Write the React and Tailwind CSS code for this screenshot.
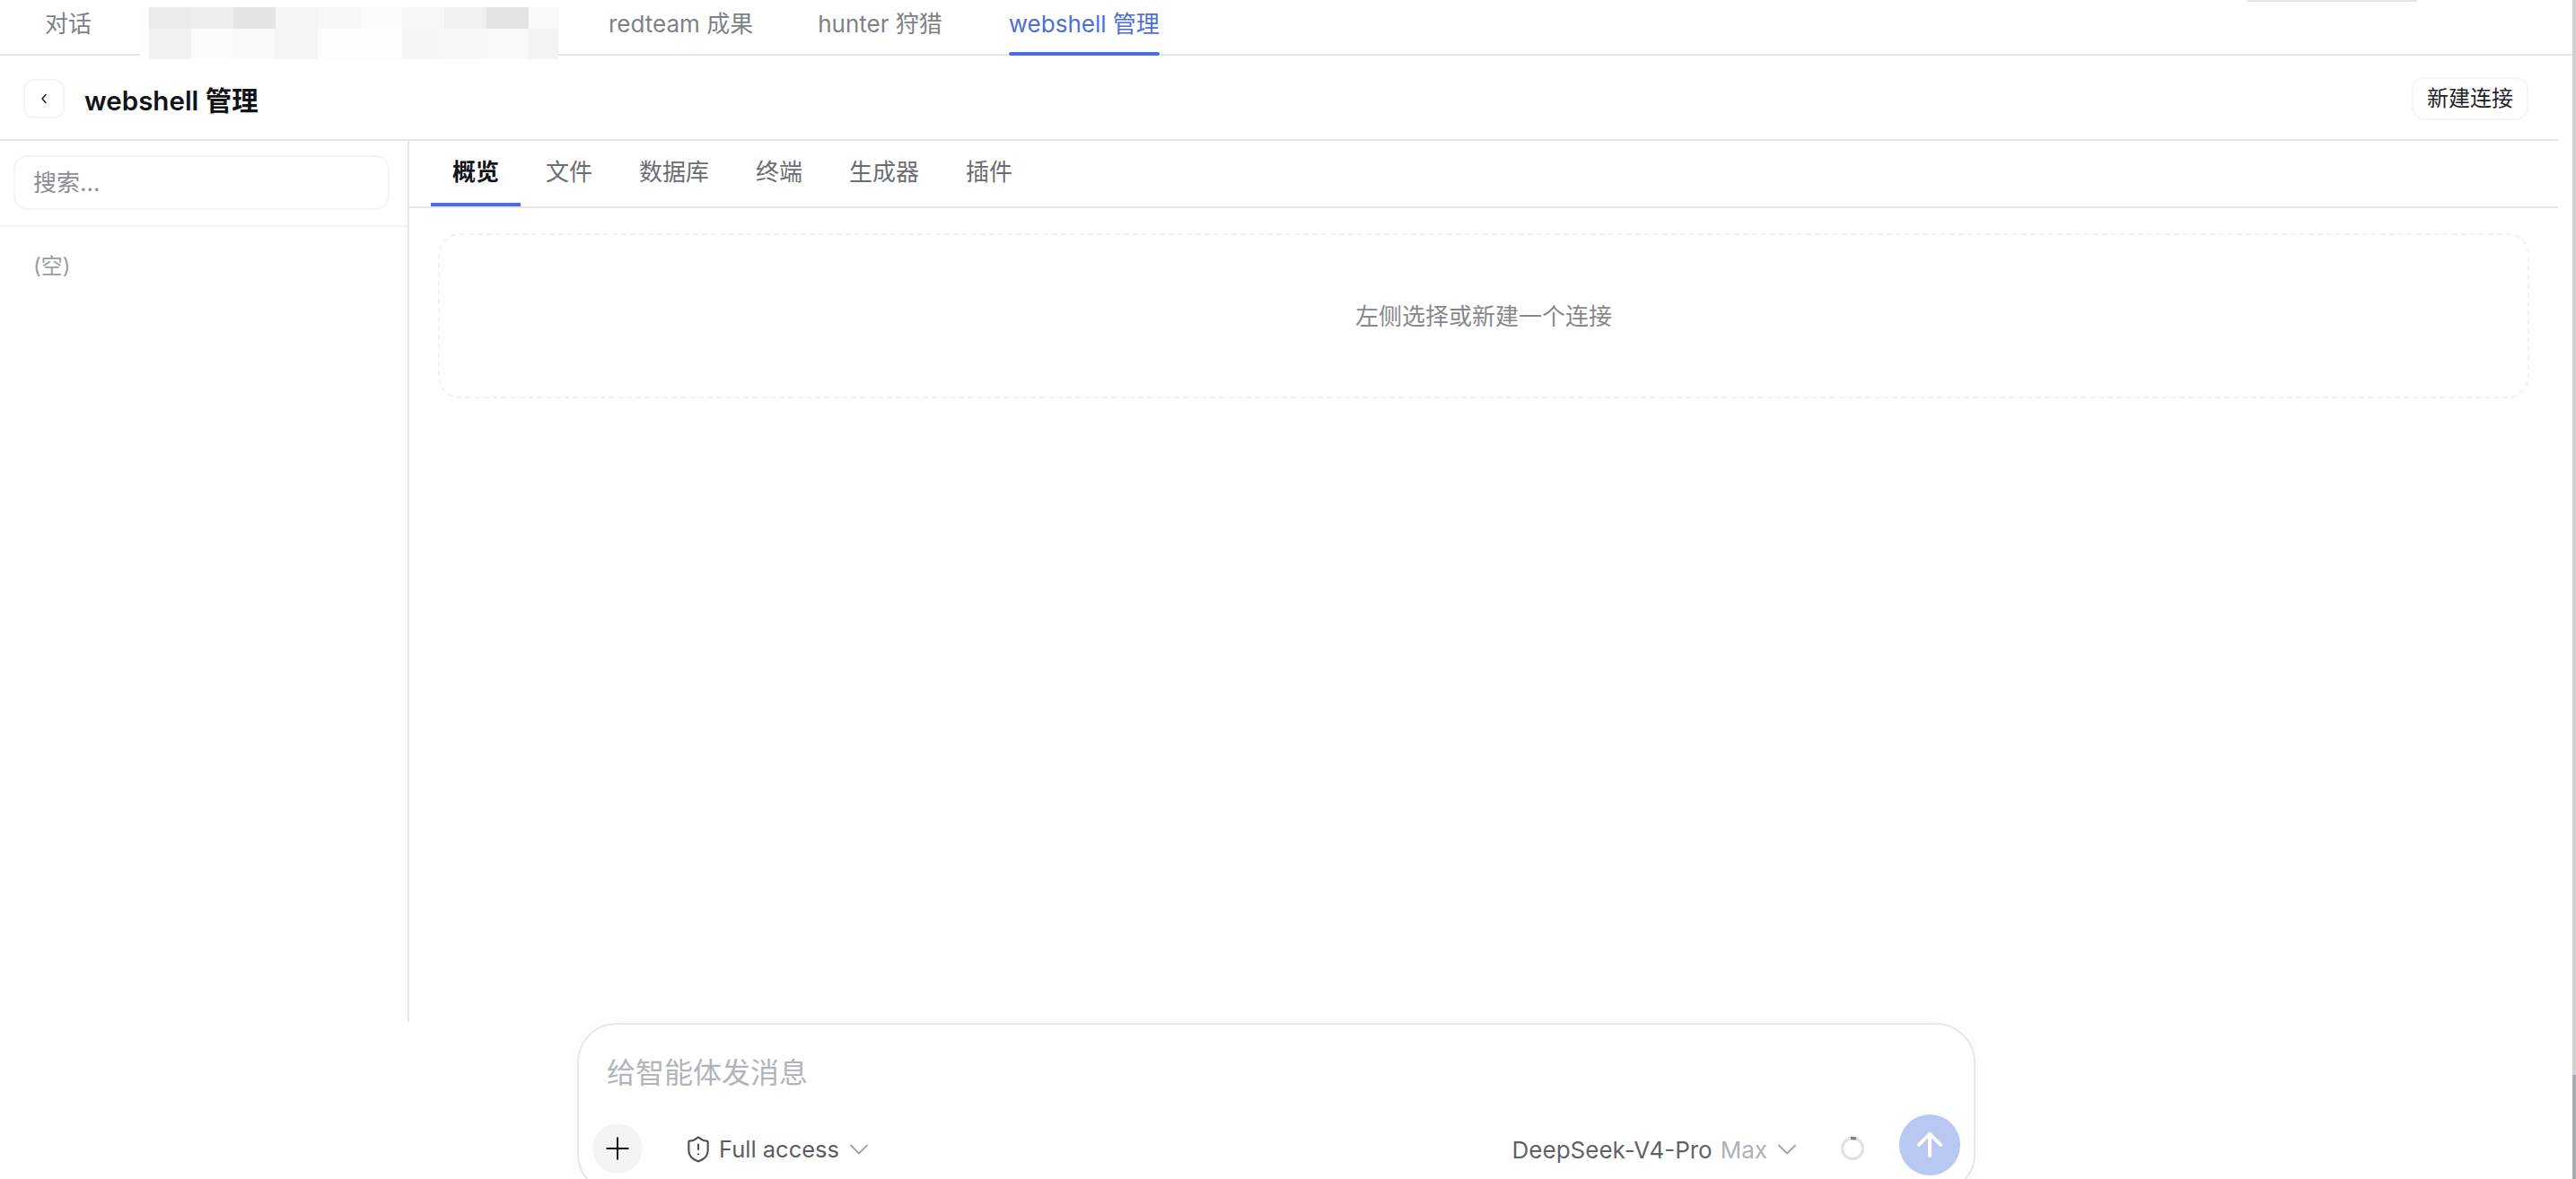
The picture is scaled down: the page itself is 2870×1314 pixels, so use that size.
import { ChevronDown, Plus, ShieldAlert, ArrowUp } from 'lucide-react';

const FONT = "font-['Inter','Noto_Sans_CJK_SC',sans-serif]";

const MOSAIC = [
  '#fdfdfd', '#ebebeb', '#ededed', '#e4e4e4', '#f5f5f5', '#f8f8f8', '#fbfbfb', '#f7f8f7', '#f0f0f0', '#e2e3e4', '#f9f9f9',
  '#fdfdfd', '#f1f1f1', '#fbfbfb', '#f9f9f9', '#f5f5f5', '#fdfdfd', '#fdfdfd', '#f6f6f6', '#f8f8f8', '#f9f9f9', '#f2f3f2',
];

const PANEL_TABS = ['文件', '数据库', '终端', '生成器', '插件'];

function TopTab({ label, active }) {
  return (
    <div className="flex h-[62px] flex-col justify-between">
      <span className={`mt-[12px] text-[26px] leading-[30px] ${active ? 'text-[#4a6fdc]' : 'text-[#7d8188]'}`}>{label}</span>
      <span className={`h-1 rounded-full ${active ? 'bg-[#4a6fdc]' : ''}`} />
    </div>
  );
}

function TopBar() {
  return (
    <div className="flex h-[62px] shrink-0 border-b-2 border-[#e5e7eb] pl-[50px] gap-[72px]">
      <TopTab label="对话" />
      {/* redacted tabs */}
      <div className="z-10 -ml-[18px] -mr-[16px] mt-2 grid h-[58px] w-[466px] shrink-0 grid-cols-[10px_repeat(9,47px)_1fr] grid-rows-[24px_34px]">
        {MOSAIC.map((c, i) => (
          <div key={i} style={{ backgroundColor: c }} />
        ))}
      </div>
      <TopTab label="redteam 成果" />
      <TopTab label="hunter 狩猎" />
      <div className="ml-[2px]">
        <TopTab label="webshell 管理" active />
      </div>
    </div>
  );
}

function PageHeader() {
  return (
    <div className="flex h-[95px] shrink-0 items-center justify-between border-b-2 border-[#e5e7eb] pl-[26px] pr-[33px] pt-[3px]">
      <div className="flex items-center gap-[22px]">
        <button className="flex h-[44px] w-[46px] items-center justify-center rounded-[12px] border-2 border-[#f3f4f6]">
          <svg width="8" height="12" viewBox="0 0 8 12" fill="none" stroke="#1f2937" strokeWidth="1.6" strokeLinecap="round" strokeLinejoin="round">
            <path d="M6 1.5 2 6l4 4.5" />
          </svg>
        </button>
        <h1 className="mt-[3px] text-[29.5px] font-semibold leading-[36px] text-[#111318]">webshell 管理</h1>
      </div>
      <button className="flex h-[48px] w-[130px] items-center justify-center rounded-[14px] border-2 border-[#f3f4f6] text-[24px] leading-[30px] text-[#1f2329]">
        新建连接
      </button>
    </div>
  );
}

function Sidebar() {
  return (
    <aside className="w-[456px] shrink-0 border-r-2 border-[#e5e7eb]">
      <div className="h-[96px] border-b-2 border-[#f1f2f3] pl-[15px] pr-[20px] pt-[16px]">
        <div className="flex h-[61px] items-center rounded-[16px] border-2 border-[#f3f4f6] pl-[20px] text-[26px] text-[#8a8d92]">搜索...</div>
      </div>
      <div className="pl-[37px] pt-[28px] text-[24px] leading-[32px] text-[#9a9da3]">(空)</div>
    </aside>
  );
}

function Panel() {
  return (
    <div className="min-w-0 flex-1">
      <div className="flex h-[75px] gap-1 border-b-2 border-[#e5e7eb] pl-6">
        <div className="flex h-[73px] flex-col justify-between">
          <span className="mt-[19px] px-6 text-[26px] font-semibold leading-[32px] text-[#111318]">概览</span>
          <span className="h-1 bg-[#4f6ae8]" />
        </div>
        {PANEL_TABS.map(t => (
          <span key={t} className="mt-[19px] px-6 text-[26px] leading-[32px] text-[#6a6d73]">{t}</span>
        ))}
      </div>
      <div className="px-[32px] pt-[28px]">
        <div className="flex h-[184px] items-center justify-center rounded-[24px] border-2 border-dashed border-[#f1f2f3] text-[26px] text-[#85888e]">
          左侧选择或新建一个连接
        </div>
      </div>
    </div>
  );
}

function Composer() {
  return (
    <div className="-mt-[1px] ml-[643px] h-[190px] w-[1558px] shrink-0 rounded-[44px] border-2 border-[#e5e7eb] bg-white pl-[15px] pr-[15px] shadow-[0_2px_16px_rgba(0,0,0,0.04)]">
      <div className="pl-[16px] pt-[34px] text-[32px] leading-[40px] text-[#b0b5bc]">给智能体发消息</div>
      <div className="mt-[26px] flex items-start">
        <button className="mt-[10px] flex h-[56px] w-[56px] items-center justify-center rounded-full bg-[#f3f4f6]">
          <Plus size={40} strokeWidth={1.2} className="text-[#111318]" />
        </button>
        <div className="ml-[46px] mt-[23px] flex h-[32px] items-center text-[25.5px] text-[#5a5e63]">
          <ShieldAlert size={32} strokeWidth={1.6} className="text-[#4b5056]" />
          <span className="ml-[7px]">Full access</span>
          <ChevronDown size={36} strokeWidth={1.2} className="ml-[4px] text-[#9ca3af]" />
        </div>
        <div className="ml-auto mt-[23px] flex h-[32px] items-center text-[26px] text-[#5f6368]">
          <span>DeepSeek-V4-Pro</span>
          <span className="ml-[9px] text-[#aeb2b8]">Max</span>
          <ChevronDown size={36} strokeWidth={1.2} className="ml-[4px] text-[#9ca3af]" />
        </div>
        <svg className="ml-[41px] mt-[24px]" width="28" height="28" viewBox="0 0 28 28" fill="none" strokeWidth="3.4">
          <circle cx="14" cy="14" r="11.5" stroke="#e3e3e3" />
          <path d="M12 2.7a11.5 11.5 0 0 1 6 .5" stroke="#7d8087" />
        </svg>
        <button className="ml-[38px] flex h-[68px] w-[68px] items-center justify-center rounded-full bg-[#b9c8f2]">
          <ArrowUp size={42} strokeWidth={2.2} className="text-white" />
        </button>
      </div>
    </div>
  );
}

export default function App() {
  return (
    <div className={`${FONT} relative flex h-[1314px] overflow-hidden bg-white`}>
      <div className="flex min-w-0 flex-1 flex-col">
        <TopBar />
        <div className="mr-4 flex min-h-0 flex-1 flex-col">
          <PageHeader />
          <div className="flex h-[982px] shrink-0">
            <Sidebar />
            <Panel />
          </div>
        </div>
        <div className="mb-[-17px] h-[190px] shrink-0">
          <Composer />
        </div>
      </div>
      {/* window edge */}
      <div className="flex w-1 shrink-0 flex-col">
        <div className="h-[1198px] bg-[#d0d0d0]" />
        <div className="flex-1 bg-[#a4abb2]" />
      </div>
      {/* pill clipped by top edge */}
      <div className="absolute left-[2503px] top-0 h-[2px] w-[190px] rounded-b-[6px] bg-[#e5e5e5]" />
    </div>
  );
}
